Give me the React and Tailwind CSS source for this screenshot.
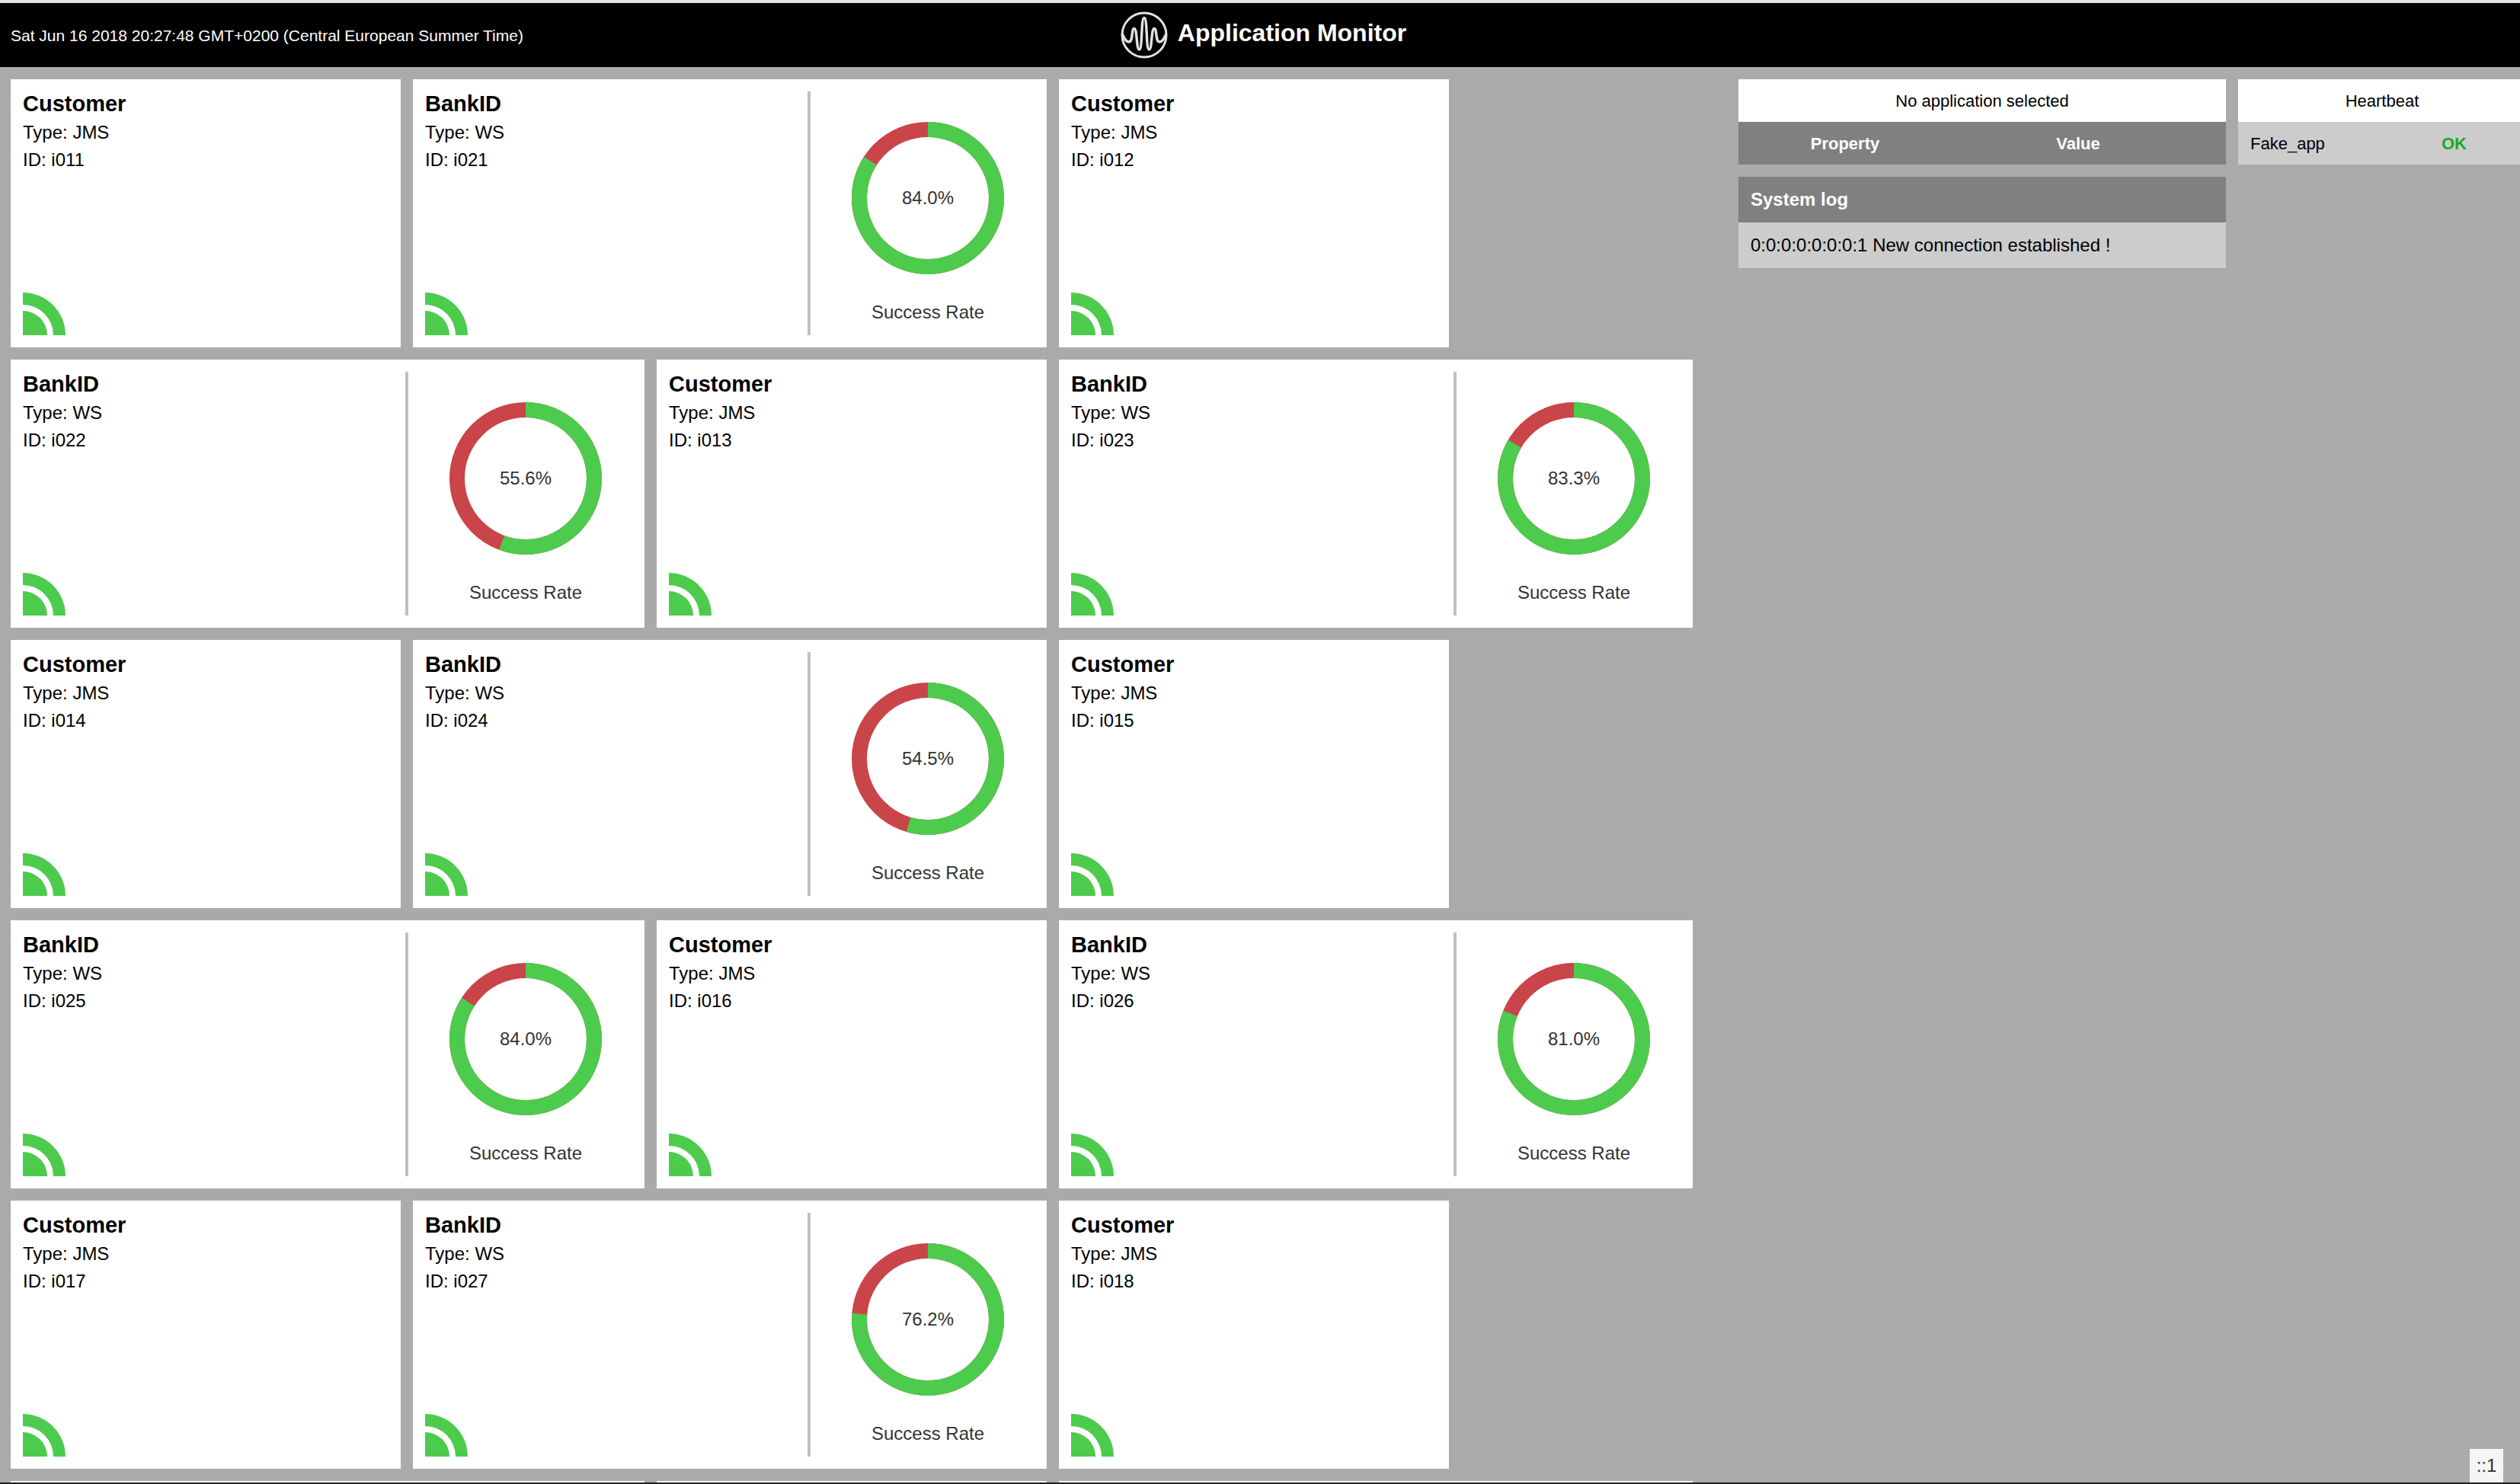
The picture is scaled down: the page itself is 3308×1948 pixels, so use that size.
const GREEN = "#4dcb4d";
const RED = "#c94549";

const customer = (id) => ({ name: "Customer", type: "JMS", id });
const bank = (id, rate) => ({ name: "BankID", type: "WS", id, rate });

const apps = [
  customer("i011"), bank("i021", 84.0), customer("i012"),
  bank("i022", 55.6), customer("i013"), bank("i023", 83.3),
  customer("i014"), bank("i024", 54.5), customer("i015"),
  bank("i025", 84.0), customer("i016"), bank("i026", 81.0),
  customer("i017"), bank("i027", 76.2), customer("i018"),
];

function Logo() {
  return (
    <svg viewBox="0 0 72 72" className="size-[72px] shrink-0" fill="none" stroke="#e2e2e2" strokeWidth="3.4" strokeLinejoin="round" strokeLinecap="round" aria-hidden="true">
      <circle cx="36" cy="36" r="29" strokeWidth="3" />
      <path d="M8 36C10 41 12.500 45 16 45C21.500 45 19 27.500 22.800 27.500C27 27.500 25.500 55 29.500 55C34 55 31.500 13.500 36 13.500C40.500 13.500 38 55 42.500 55C46.500 55 45 27.500 49.200 27.500C53 27.500 50.500 45 56 45C59.500 45 62 41 64 36" />
    </svg>
  );
}

function Signal() {
  return (
    <svg viewBox="0 0 56 56" className="size-14" fill={GREEN} aria-hidden="true">
      <path d="M0 0A56 56 0 0 1 56 56H40A40 40 0 0 0 0 16Z" />
      <path d="M0 24A32 32 0 0 1 32 56H0Z" />
    </svg>
  );
}

function Donut({ rate }) {
  const c = 2 * Math.PI * 90;
  return (
    <div className="grid place-items-center">
      <svg viewBox="0 0 200 200" className="col-start-1 row-start-1 size-[200px] -rotate-90" fill="none" strokeWidth="20" aria-hidden="true">
        <circle cx="100" cy="100" r="90" stroke={RED} />
        <circle cx="100" cy="100" r="90" stroke={GREEN} strokeDasharray={`${(c * rate) / 100} ${c}`} />
      </svg>
      <span className="col-start-1 row-start-1">{rate.toFixed(1)}%</span>
    </div>
  );
}

function Card({ app }) {
  const wide = app.rate !== undefined;
  return (
    <article className={wide ? "flex h-[352px] w-[832px] bg-white py-4 pl-4" : "flex h-[352px] w-[512px] bg-white p-4"}>
      <div className="flex flex-1 flex-col">
        <h2 className="text-[29px] leading-8 font-bold">{app.name}</h2>
        <p className="mt-1 leading-9">Type: {app.type}</p>
        <p className="leading-9">ID: {app.id}</p>
        <div className="mt-auto"><Signal /></div>
      </div>
      {wide && (
        <div className="flex w-[314px] flex-col items-center border-l-4 border-[#c0c0c0] pt-10 pr-0.5 text-[#333]">
          <Donut rate={app.rate} />
          <p className="mt-8 leading-9">Success Rate</p>
        </div>
      )}
    </article>
  );
}

export default function App() {
  return (
    <div className="flex h-screen flex-col overflow-hidden border-b-2 border-[#222] bg-[#aaaaaa] font-['Liberation_Sans',Arial,sans-serif] text-2xl text-black">
      <header className="grid h-[88px] shrink-0 grid-cols-[1fr_auto_1fr] items-center border-t-4 border-[#e4e4e4] bg-black text-white">
        <time className="pt-0.5 pl-3.5 text-[21px]">Sat Jun 16 2018 20:27:48 GMT+0200 (Central European Summer Time)</time>
        <div className="flex items-center gap-2 pl-1">
          <Logo />
          <h1 className="pb-1.5 text-[32px] font-bold">Application Monitor</h1>
        </div>
      </header>
      <main className="flex min-h-0 flex-1 items-start gap-4 pt-4">
        <section className="flex flex-1 flex-wrap gap-4 pl-3.5" aria-label="Applications">
          {apps.map((app) => <Card key={app.id} app={app} />)}
          <div className="h-[352px] w-[832px] bg-white" />
          <div className="h-[352px] w-[512px] bg-white" />
          <div className="h-[352px] w-[832px] bg-white" />
        </section>
        <aside className="flex w-[640px] shrink-0 flex-col gap-4">
          <table className="w-full table-fixed text-[22px]">
            <caption className="h-14 bg-white leading-[58px]">No application selected</caption>
            <colgroup><col className="w-[280px]" /><col /></colgroup>
            <thead>
              <tr className="h-14 bg-[#808080] text-white">
                <th scope="col" className="pt-0.5">Property</th>
                <th scope="col" className="pt-0.5 pr-7">Value</th>
              </tr>
            </thead>
          </table>
          <section>
            <h2 className="bg-[#808080] px-4 text-2xl leading-[60px] font-bold text-white">System log</h2>
            <p className="bg-[#cccccc] px-4 leading-[60px]">0:0:0:0:0:0:0:1 New connection established !</p>
          </section>
        </aside>
        <table className="-mr-2 w-[378px] shrink-0 table-fixed text-[22px]">
          <caption className="h-14 bg-white leading-[58px]">Heartbeat</caption>
          <tbody>
            <tr className="h-14 bg-[#cccccc]">
              <th scope="row" className="pt-0.5 pl-4 text-left font-normal">Fake_app</th>
              <td className="pt-0.5 text-center font-bold text-[#1aaa1a]">OK</td>
            </tr>
          </tbody>
        </table>
      </main>
      <div className="fixed right-[22px] bottom-0.5 h-11 w-11 bg-[#f6f5f3] text-center text-2xl leading-[44px] text-[#333]">::1</div>
    </div>
  );
}
